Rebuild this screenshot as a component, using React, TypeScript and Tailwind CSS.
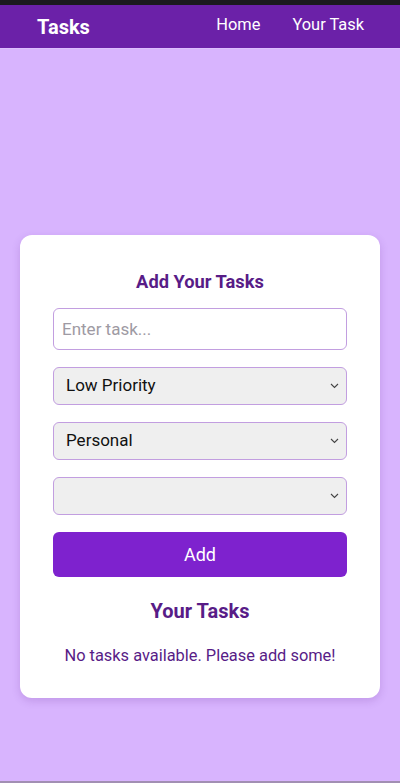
export default function App() {
  return (
    <div
      className="h-[783px] flex flex-col bg-[#d8b4fe] overflow-hidden"
      style={{ fontFamily: 'Roboto, "Noto Sans", sans-serif' }}
    >
      {/* status strip */}
      <div className="h-[5px] bg-[#1c1a1f] shrink-0" />

      {/* Navbar */}
      <nav className="h-[43px] shrink-0 bg-[#6b21a8] flex items-center px-[37px] shadow-[0_1px_0_rgba(255,255,255,0.15)]">
        <span className="text-white text-[20px] font-bold">Tasks</span>
        <div className="ml-auto flex items-center gap-[32px] text-white text-[16.4px] mr-[-1px] pb-[2px]">
          <span>Home</span>
          <span>Your Task</span>
        </div>
      </nav>

      <main className="flex-1 px-5 pt-[187px]">
        <div className="bg-white rounded-xl shadow-[0_3px_8px_rgba(88,28,135,0.18)] px-[33px] pt-[35px] pb-[30px]">
          <h2 className="text-center text-[18.3px] font-bold text-[#581c87] leading-6">Add Your Tasks</h2>

          <input
            type="text"
            placeholder="Enter task..."
            className="mt-[14px] w-full h-[42px] rounded-md border border-[#c29ee0] px-2 text-[17px] text-gray-800 placeholder:text-[#9e9aa3] outline-none"
          />

          <Select value="Low Priority" className="mt-[17px]" />
          <Select value="Personal" className="mt-[17px]" />
          <Select value="" className="mt-[17px]" />

          <button className="mt-[17px] w-full h-[45px] rounded-md bg-[#7e22ce] text-white text-[18px]">
            Add
          </button>

          <h2 className="mt-[20px] text-center text-[20px] font-bold text-[#581c87] leading-7">Your Tasks</h2>
          <p className="mt-[19px] text-center text-[16.4px] text-[#581c87] leading-6">
            No tasks available. Please add some!
          </p>
        </div>
      </main>

      <div className="h-[2px] shrink-0 bg-[#a28fb3]" />
    </div>
  );
}

function Select({ value, className }: { value: string; className?: string }) {
  return (
    <div
      className={`${className} w-full h-[38px] rounded-md border border-[#c29ee0] bg-[#efefef] flex items-center pl-3 pr-[7px]`}
    >
      <span className="text-[17px] text-[#111] flex-1">{value}</span>
      <svg width="9" height="6" viewBox="0 0 9 6" fill="none">
        <path d="M1 1l3.5 3.5L8 1" stroke="#444" strokeWidth="1.1" />
      </svg>
    </div>
  );
}
